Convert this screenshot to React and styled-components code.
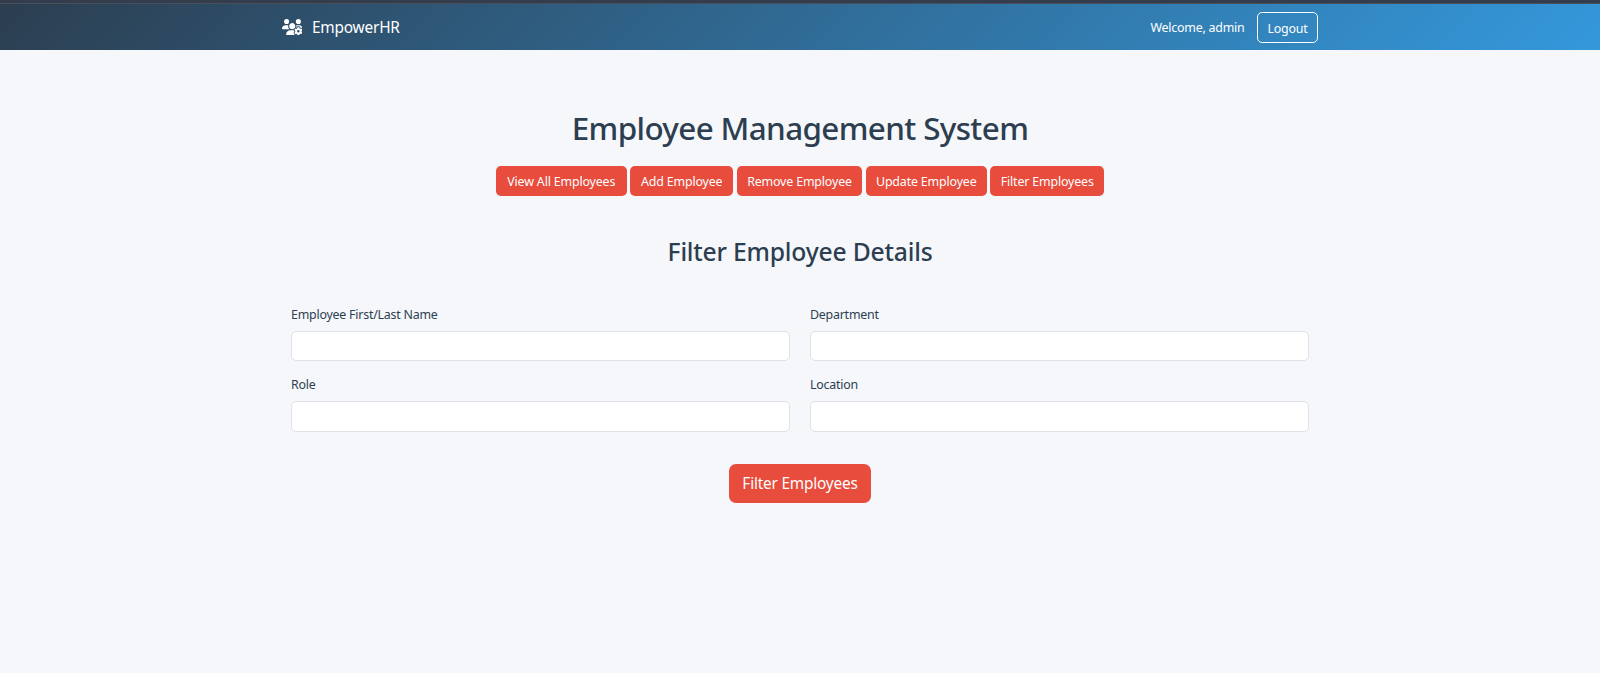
import React from "react";
import styled, { createGlobalStyle } from "styled-components";
import { FaUsersGear } from "react-icons/fa6";

const Global = createGlobalStyle`
  *, *::before, *::after { box-sizing: border-box; }
  body {
    margin: 0;
    background: #f5f7fb;
    color: #2c3e50;
    font-family: "Segoe UI", "Noto Sans", "Open Sans", sans-serif;
    font-size: 12.4px;
    letter-spacing: -0.22px;
    line-height: 20px;
  }
`;

const TopStrip = styled.div`
  height: 4px;
  background: #343d4e;
  border-bottom: 1px solid #4a5058;
`;

const Navbar = styled.nav`
  height: 46px;
  background: linear-gradient(135deg, #2c3e50, #3498db);
  color: #fff;
`;

const NavInner = styled.div`
  width: 1036px;
  height: 100%;
  margin: 0 auto;
  display: flex;
  align-items: center;
  justify-content: space-between;
`;

const Brand = styled.a`
  display: flex;
  align-items: center;
  gap: 10px;
  margin-left: -0.5px;
  font-size: 15.4px;
  letter-spacing: -0.2px;
  svg { width: 20.5px; height: 16.4px; }
  span { padding-top: 2px; }
`;

const UserArea = styled.div`
  display: flex;
  align-items: center;
  gap: 12.5px;
`;

const Welcome = styled.span`
  padding-top: 2px;
`;

const LogoutButton = styled.button`
  width: 61px;
  height: 31px;
  padding: 3px 0 0;
  border: 1px solid #fff;
  border-radius: 5px;
  background: transparent;
  color: inherit;
  font: inherit;
  letter-spacing: inherit;
`;

const Main = styled.main`
  width: 1018px;
  margin: 0 auto;
  padding-top: 59px;
  display: flex;
  flex-direction: column;
  align-items: center;
`;

const Title = styled.h1`
  margin: 0;
  font-size: 31.4px;
  font-weight: 500;
  line-height: 38px;
  letter-spacing: -0.63px;
`;

const Actions = styled.div`
  display: flex;
  gap: 3.5px;
  margin-top: 19px;
`;

const ActionButton = styled.button`
  width: ${({ $width }) => $width}px;
  height: 30px;
  padding: 2px 0 0;
  border: 0;
  border-radius: 5px;
  background: #e74c3c;
  color: #fff;
  font: inherit;
  letter-spacing: -0.15px;
  white-space: nowrap;
`;

const Subtitle = styled.h2`
  margin: 40px 0 0;
  font-size: 24.7px;
  font-weight: 500;
  line-height: 32px;
  letter-spacing: -0.2px;
`;

const Form = styled.form`
  width: 100%;
  display: flex;
  flex-direction: column;
  align-items: center;
`;

const Fields = styled.div`
  width: 100%;
  margin-top: 37px;
  display: grid;
  grid-template-columns: 1fr 1fr;
  gap: 13.9px 20px;
`;

const Field = styled.label`
  display: flex;
  flex-direction: column;
  gap: 6px;
`;

const Input = styled.input`
  width: 100%;
  height: 30.4px;
  padding: 0 10px;
  border: 1px solid #dee2e6;
  border-radius: 5px;
  background: #fff;
  font: inherit;
`;

const SubmitButton = styled(ActionButton)`
  height: 39px;
  margin-top: 32.3px;
  padding: 1px 0 0;
  border-radius: 7px;
  font-size: 15.4px;
  letter-spacing: -0.2px;
`;

const actions = [
  ["View All Employees", 131],
  ["Add Employee", 103],
  ["Remove Employee", 125.5],
  ["Update Employee", 121],
  ["Filter Employees", 114],
];

const fields = ["Employee First/Last Name", "Department", "Role", "Location"];

export default function App() {
  return (
    <>
      <Global />
      <TopStrip />
      <Navbar>
        <NavInner>
          <Brand><FaUsersGear /><span>EmpowerHR</span></Brand>
          <UserArea>
            <Welcome>Welcome, admin</Welcome>
            <LogoutButton>Logout</LogoutButton>
          </UserArea>
        </NavInner>
      </Navbar>
      <Main>
        <Title>Employee Management System</Title>
        <Actions>
          {actions.map(([text, width]) => (
            <ActionButton key={text} $width={width}>{text}</ActionButton>
          ))}
        </Actions>
        <Subtitle>Filter Employee Details</Subtitle>
        <Form>
          <Fields>
            {fields.map((name) => (
              <Field key={name}>{name}<Input /></Field>
            ))}
          </Fields>
          <SubmitButton type="button" $width={142}>Filter Employees</SubmitButton>
        </Form>
      </Main>
    </>
  );
}
